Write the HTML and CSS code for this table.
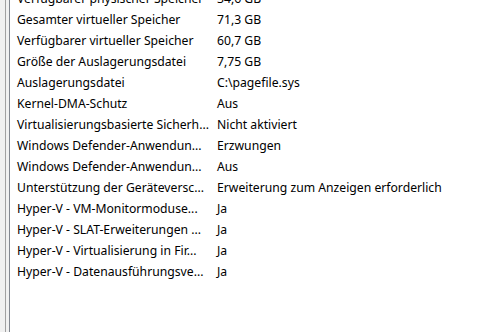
FILE: index.html
```html
<!DOCTYPE html>
<html lang="de">
<head>
  <meta charset="UTF-8">
  <meta name="viewport" content="width=device-width, initial-scale=1.0">
  <title>Systeminformationen</title>
  <link rel="stylesheet" href="styles.css">
</head>
<body>
  <div class="frame">
    <div class="pane">
      <div class="list">
        <div class="row"><span class="item">Verfügbarer physischer Speicher</span><span class="value">34,6 GB</span></div>
        <div class="row"><span class="item">Gesamter virtueller Speicher</span><span class="value">71,3 GB</span></div>
        <div class="row"><span class="item">Verfügbarer virtueller Speicher</span><span class="value">60,7 GB</span></div>
        <div class="row"><span class="item">Größe der Auslagerungsdatei</span><span class="value">7,75 GB</span></div>
        <div class="row"><span class="item">Auslagerungsdatei</span><span class="value">C:\pagefile.sys</span></div>
        <div class="row"><span class="item">Kernel-DMA-Schutz</span><span class="value">Aus</span></div>
        <div class="row"><span class="item">Virtualisierungsbasierte Sicherh...</span><span class="value">Nicht aktiviert</span></div>
        <div class="row"><span class="item">Windows Defender-Anwendun...</span><span class="value">Erzwungen</span></div>
        <div class="row"><span class="item">Windows Defender-Anwendun...</span><span class="value">Aus</span></div>
        <div class="row"><span class="item">Unterstützung der Geräteversc...</span><span class="value">Erweiterung zum Anzeigen erforderlich</span></div>
        <div class="row"><span class="item">Hyper-V - VM-Monitormoduse...</span><span class="value">Ja</span></div>
        <div class="row"><span class="item">Hyper-V - SLAT-Erweiterungen ...</span><span class="value">Ja</span></div>
        <div class="row"><span class="item">Hyper-V - Virtualisierung in Fir...</span><span class="value">Ja</span></div>
        <div class="row"><span class="item">Hyper-V - Datenausführungsve...</span><span class="value">Ja</span></div>
      </div>
    </div>
  </div>
</body>
</html>
```

FILE: styles.css
```css
html, body {
  margin: 0;
  padding: 0;
  height: 100%;
}
body {
  font-family: "Noto Sans", "Open Sans", sans-serif;
  font-size: 12.2px;
  color: #000;
  background-color: #f0f0f0;
  overflow: hidden;
}
.frame {
  height: 100%;
  padding-left: 5px;
  display: flex;
}
.pane {
  flex: 1;
  border-left: 1px solid #a0a0a0;
  padding-left: 3px;
  display: flex;
}
.list {
  flex: 1;
  background-color: #fff;
  border-left: 1px solid #828790;
  overflow: hidden;
}
/* the list is scrolled a little, first row is cut off */
.list {
  margin-top: -12px;
}
.row {
  display: flex;
  height: 21px;
  align-items: center;
  white-space: nowrap;
}
.item {
  width: 200px;
  padding-left: 7px;
  overflow: hidden;
}
.value {
  padding-left: 0;
}
```
